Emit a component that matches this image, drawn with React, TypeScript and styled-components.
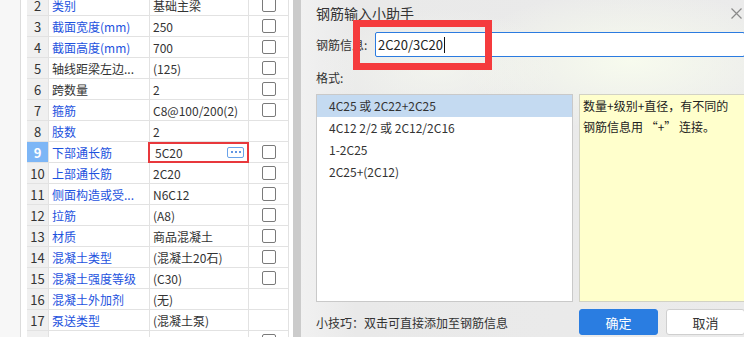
import React from "react";
import styled, { createGlobalStyle } from "styled-components";

type Tone = "link" | "plain";

interface RowData {
  no: number;
  name: string;
  value: string;
  tone: Tone;
  check: boolean;
}

const GlobalStyle = createGlobalStyle`
  html, body {
    margin: 0;
    padding: 0;
    width: 744px;
    height: 337px;
    overflow: hidden;
    background: #ffffff;
  }
  body {
    font-family: "Noto Sans CJK SC", "Noto Sans", sans-serif;
    font-size: 12px;
    color: #333333;
  }
  * {
    box-sizing: border-box;
  }
`;

const Page = styled.div`
  display: flex;
  width: 744px;
  height: 337px;
  overflow: hidden;
`;

const Gutter = styled.div`
  flex: none;
  width: 21px;
  background: #f7f7f7;
  border-right: 1px solid #dcdcdc;
`;

const TablePanel = styled.div`
  flex: none;
  padding: 0 4px 0 6px;
  background: #ffffff;
  overflow: hidden;
`;

const Table = styled.div`
  margin-top: -5px;
  width: 262px;
`;

const Row = styled.div`
  display: grid;
  grid-template-columns: 22px 101px 99px 40px;
  height: 21px;
`;

const Cell = styled.div`
  display: flex;
  align-items: center;
  height: 21px;
  border-right: 1px solid #e2e2e2;
  border-bottom: 1px solid #e2e2e2;
  white-space: nowrap;
  overflow: hidden;
`;

const NumCell = styled(Cell)<{ $selected?: boolean }>`
  justify-content: center;
  background: ${(p) => (p.$selected ? "#7db6f6" : "#f0f0f0")};
  color: ${(p) => (p.$selected ? "#ffffff" : "#333333")};
  font-weight: ${(p) => (p.$selected ? 700 : 400)};
  font-size: 13px;
`;

const NameCell = styled(Cell)<{ $tone: Tone }>`
  padding-left: 3px;
  color: ${(p) => (p.$tone === "link" ? "#1d52de" : "#333333")};
`;

const ValueCell = styled(Cell)<{ $editing?: boolean }>`
  position: relative;
  justify-content: space-between;
  padding: 0 4px 0 ${(p) => (p.$editing ? "5px" : "3px")};
  overflow: visible;

  ${(p) =>
    p.$editing &&
    `
    &::after {
      content: "";
      position: absolute;
      top: 0;
      bottom: -1px;
      left: -2px;
      right: -1px;
      border: 2px solid #e8383c;
      pointer-events: none;
    }
  `}
`;

const MoreButton = styled.span`
  display: flex;
  align-items: center;
  justify-content: center;
  gap: 2px;
  width: 17px;
  height: 11px;
  border: 1px solid #6aa3ea;
  border-radius: 2px;
  background: #ffffff;

  i {
    width: 2px;
    height: 2px;
    background: #2f74d8;
    border-radius: 1px;
  }
`;

const CheckCell = styled(Cell)`
  justify-content: center;
`;

const Checkbox = styled.span`
  width: 14px;
  height: 14px;
  border: 1px solid #7a7a7a;
  border-radius: 2px;
  background: #ffffff;
`;

const Divider = styled.div`
  flex: none;
  width: 8px;
  background: #cbcbcb;
`;

const Dialog = styled.section`
  position: relative;
  flex: none;
  width: 458px;
  height: 337px;
  padding: 0 14px 0 15px;
  display: flex;
  flex-direction: column;
  background:
    radial-gradient(ellipse 170px 70px at 72% 18%, rgba(248, 252, 238, 0.95), rgba(248, 252, 238, 0)),
    radial-gradient(ellipse 120px 60px at 30% 20%, rgba(246, 248, 240, 0.7), rgba(246, 248, 240, 0)),
    linear-gradient(90deg, #f1f1f1 0%, #e9e9e9 12%, #ebebeb 100%);
`;

const TitleBar = styled.header`
  display: flex;
  align-items: center;
  justify-content: space-between;
  height: 26px;
  font-size: 14px;
  color: #333333;
`;

const Close = styled.svg`
  margin-right: 3px;
`;

const FieldRow = styled.div`
  display: flex;
  align-items: center;
  margin-top: 6px;
  height: 25px;
`;

const FieldLabel = styled.label`
  flex: none;
  width: 59px;
  color: #333333;
`;

const TextBox = styled.div`
  flex: 1;
  display: flex;
  align-items: center;
  height: 25px;
  padding-left: 2px;
  background: #ffffff;
  border: 1px solid #2b7be0;
  border-radius: 2px;
  font-size: 13px;
  color: #222222;
`;

const Caret = styled.span`
  width: 1px;
  height: 16px;
  margin-left: 1px;
  background: #111111;
`;

const SectionLabel = styled.div`
  margin-top: 12px;
  height: 18px;
  line-height: 18px;
`;

const Panels = styled.div`
  display: grid;
  grid-template-columns: 257px 1fr;
  gap: 6px;
  margin-top: 7px;
  height: 208px;
`;

const ListBox = styled.ul`
  margin: 0;
  padding: 0;
  list-style: none;
  background: #ffffff;
  border: 1px solid #c9c9c9;
`;

const ListItem = styled.li<{ $active?: boolean }>`
  height: 22px;
  line-height: 22px;
  padding-left: 12px;
  background: ${(p) => (p.$active ? "#c4daf1" : "transparent")};
  color: #333333;
`;

const Hint = styled.div`
  padding: 0 3px;
  line-height: 21px;
  background: #ffffcc;
  border: 1px solid #d2d2c4;
  color: #222222;
`;

const Footer = styled.footer`
  display: flex;
  align-items: center;
  gap: 8px;
  margin-top: 7px;
  height: 26px;
`;

const Tip = styled.span`
  flex: 1;
  color: #333333;
`;

const Button = styled.button<{ $primary?: boolean }>`
  width: 79px;
  height: 26px;
  border-radius: 3px;
  border: 1px solid ${(p) => (p.$primary ? "#2a7de1" : "#cfcfcf")};
  background: ${(p) => (p.$primary ? "#2a7de1" : "#ffffff")};
  color: ${(p) => (p.$primary ? "#ffffff" : "#333333")};
  font-family: inherit;
  font-size: 13px;
  padding: 0;
`;

const Annotation = styled.div`
  position: absolute;
  left: 52px;
  top: 20px;
  width: 139px;
  height: 50px;
  border: 7px solid #f53b3d;
  pointer-events: none;
`;

const rows: RowData[] = [
  { no: 2, name: "类别", value: "基础主梁", tone: "link", check: true },
  { no: 3, name: "截面宽度(mm)", value: "250", tone: "link", check: true },
  { no: 4, name: "截面高度(mm)", value: "700", tone: "link", check: true },
  { no: 5, name: "轴线距梁左边...", value: "(125)", tone: "plain", check: true },
  { no: 6, name: "跨数量", value: "2", tone: "plain", check: true },
  { no: 7, name: "箍筋", value: "C8@100/200(2)", tone: "link", check: true },
  { no: 8, name: "肢数", value: "2", tone: "link", check: false },
  { no: 9, name: "下部通长筋", value: "5C20", tone: "link", check: true },
  { no: 10, name: "上部通长筋", value: "2C20", tone: "link", check: true },
  { no: 11, name: "侧面构造或受...", value: "N6C12", tone: "link", check: true },
  { no: 12, name: "拉筋", value: "(A8)", tone: "link", check: true },
  { no: 13, name: "材质", value: "商品混凝土", tone: "link", check: true },
  { no: 14, name: "混凝土类型", value: "(混凝土20石)", tone: "link", check: true },
  { no: 15, name: "混凝土强度等级", value: "(C30)", tone: "link", check: true },
  { no: 16, name: "混凝土外加剂", value: "(无)", tone: "link", check: false },
  { no: 17, name: "泵送类型", value: "(混凝土泵)", tone: "link", check: false },
  { no: 18, name: "", value: "", tone: "link", check: true },
];

const formats = ["4C25 或 2C22+2C25", "4C12 2/2 或 2C12/2C16", "1-2C25", "2C25+(2C12)"];

const SELECTED = 9;

const App: React.FC = () => {
  return (
    <>
      <GlobalStyle />
      <Page>
        <Gutter />
        <TablePanel>
          <Table>
            {rows.map((row) => {
              const selected = row.no === SELECTED;
              return (
                <Row key={row.no}>
                  <NumCell $selected={selected}>{row.no}</NumCell>
                  <NameCell $tone={row.tone}>{row.name}</NameCell>
                  <ValueCell $editing={selected}>
                    <span>{row.value}</span>
                    {selected && (
                      <MoreButton>
                        <i />
                        <i />
                        <i />
                      </MoreButton>
                    )}
                  </ValueCell>
                  <CheckCell>{row.check && <Checkbox />}</CheckCell>
                </Row>
              );
            })}
          </Table>
        </TablePanel>
        <Divider />
        <Dialog>
          <TitleBar>
            <span>钢筋输入小助手</span>
            <Close width="11" height="11" viewBox="0 0 11 11">
              <path d="M0.5 0.5L10.5 10.5M10.5 0.5L0.5 10.5" stroke="#8a8a8a" strokeWidth="1.2" />
            </Close>
          </TitleBar>
          <FieldRow>
            <FieldLabel>钢筋信息:</FieldLabel>
            <TextBox>
              2C20/3C20
              <Caret />
            </TextBox>
          </FieldRow>
          <SectionLabel>格式:</SectionLabel>
          <Panels>
            <ListBox>
              {formats.map((f, i) => (
                <ListItem key={f} $active={i === 0}>
                  {f}
                </ListItem>
              ))}
            </ListBox>
            <Hint>
              数量+级别+直径，有不同的
              <br />
              钢筋信息用 “+” 连接。
            </Hint>
          </Panels>
          <Footer>
            <Tip>小技巧：双击可直接添加至钢筋信息</Tip>
            <Button $primary>确定</Button>
            <Button>取消</Button>
          </Footer>
          <Annotation />
        </Dialog>
      </Page>
    </>
  );
};

export default App;
